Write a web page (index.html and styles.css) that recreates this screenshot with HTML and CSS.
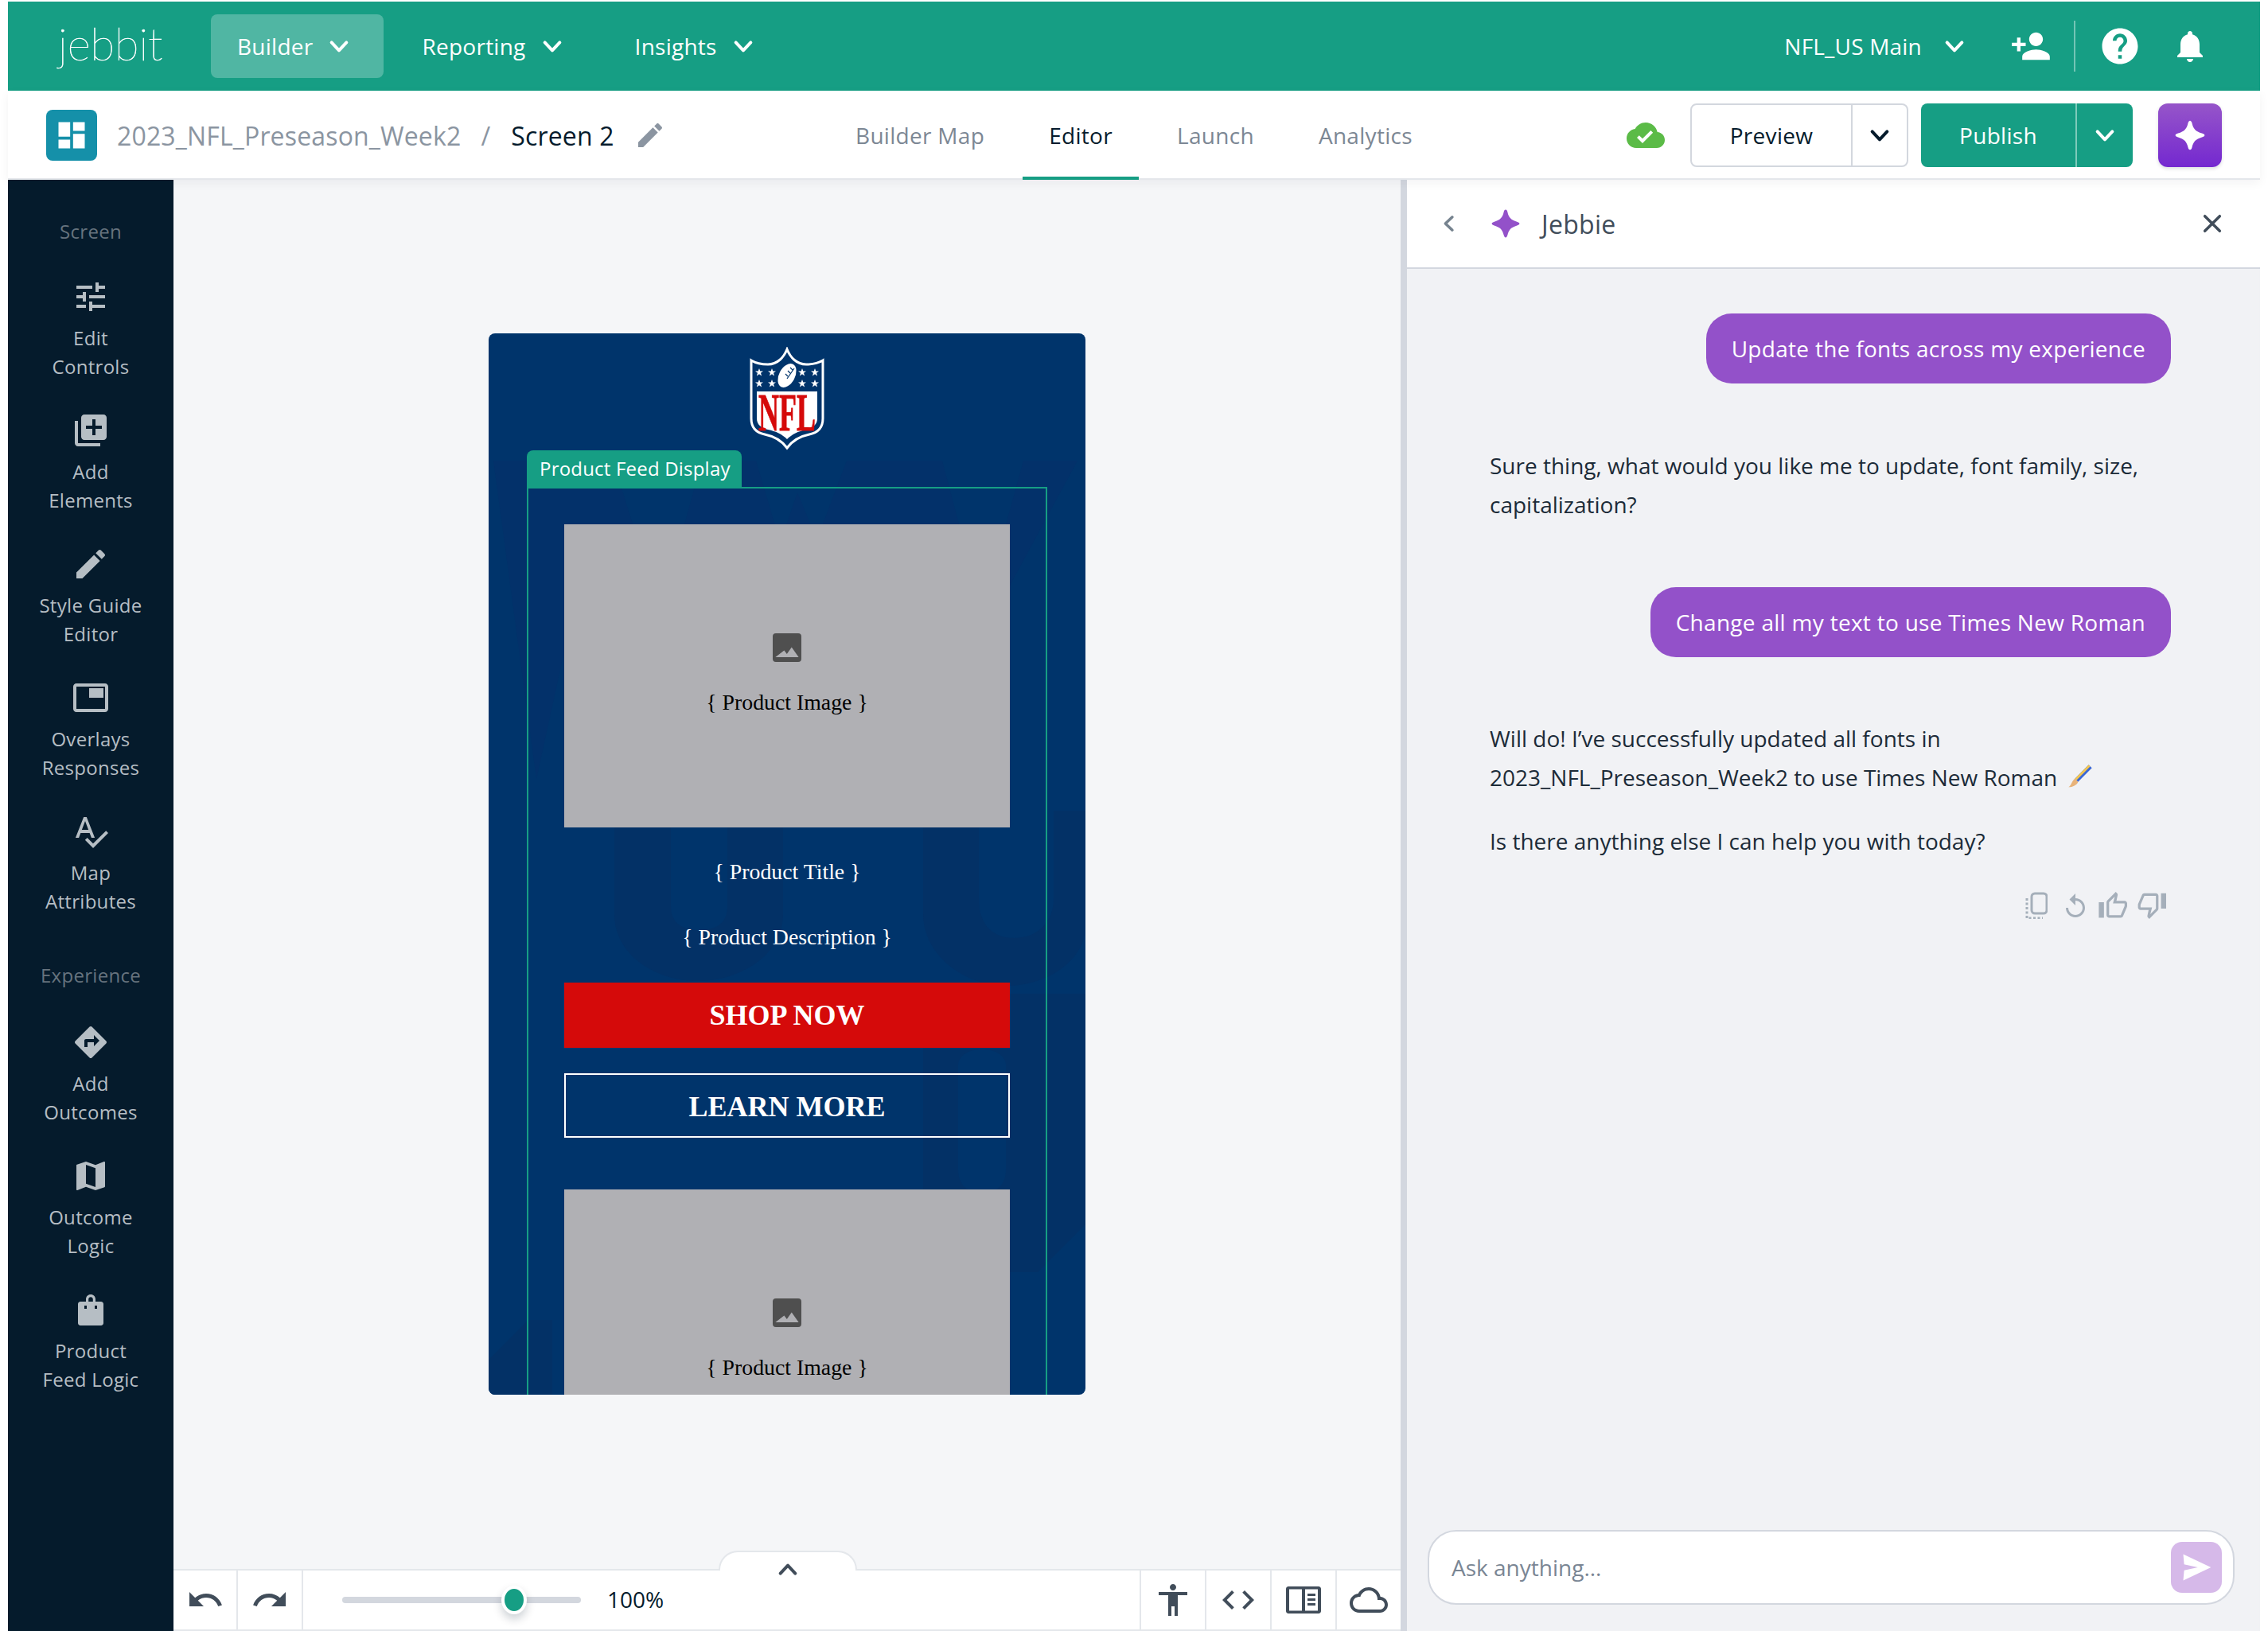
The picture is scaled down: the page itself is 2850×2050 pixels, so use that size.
FILE: index.html
```html
<!DOCTYPE html>
<html lang="en">
<head>
<meta charset="utf-8">
<title>Jebbit Builder</title>
<link rel="stylesheet" href="styles.css">
</head>
<body>
<svg class="defs" width="0" height="0" aria-hidden="true">
  <symbol id="chev" viewBox="0 0 24 24"><path d="M5 8.600 12 16l7-7.400" fill="none" stroke="currentColor" stroke-width="3" stroke-linecap="round" stroke-linejoin="round"/></symbol>
  <symbol id="img" viewBox="0 0 24 24"><path d="M5 3h14a2 2 0 0 1 2 2v14a2 2 0 0 1-2 2H5a2 2 0 0 1-2-2V5a2 2 0 0 1 2-2zm-.3 15h14.600l-4.400-6.200-3 4.200-1.700-2.200z" fill="#4f4f4f" fill-rule="evenodd"/></symbol>
  <symbol id="star" viewBox="0 0 24 24"><path d="M12 1c.8 0 1.200.8 1.500 1.800.9 4.300 2.800 6.300 7.500 7.700 1 .3 2 .7 2 1.500s-1 1.200-2 1.500c-4.700 1.400-6.600 3.400-7.500 7.700-.3 1-.7 1.800-1.500 1.800s-1.200-.8-1.500-1.800c-.9-4.300-2.800-6.300-7.500-7.700-1-.3-2-.7-2-1.500s1-1.200 2-1.500c4.700-1.400 6.600-3.400 7.500-7.700.3-1 .7-1.800 1.500-1.800z" fill="currentColor"/></symbol>
</svg>
<div class="app">
  <header class="topbar">
    <div class="wordmark">jebbit</div>
    <nav class="mainnav">
      <a class="navitem navitem-active">Builder<svg class="chev"><use href="#chev"/></svg></a>
      <a class="navitem">Reporting<svg class="chev"><use href="#chev"/></svg></a>
      <a class="navitem">Insights<svg class="chev"><use href="#chev"/></svg></a>
    </nav>
    <div class="account">
      <span class="accountname">NFL_US Main</span><svg class="chev"><use href="#chev"/></svg>
      <svg class="topicon person" viewBox="0 0 24 24"><path fill="currentColor" d="M15 12c2.210 0 4-1.790 4-4s-1.790-4-4-4-4 1.790-4 4 1.790 4 4 4zm-9-2V7H4v3H1v2h3v3h2v-3h3v-2H6zm9 4c-2.670 0-8 1.340-8 4v2h16v-2c0-2.660-5.330-4-8-4z"/></svg>
      <span class="topdivider"></span>
      <svg class="topicon help" viewBox="0 0 24 24"><path fill="currentColor" d="M12 2C6.480 2 2 6.480 2 12s4.480 10 10 10 10-4.480 10-10S17.520 2 12 2zm1 17h-2v-2h2v2zm2.070-7.750l-.9.920C13.450 12.900 13 13.500 13 15h-2v-.5c0-1.100.45-2.100 1.170-2.830l1.240-1.260c.37-.36.59-.86.59-1.410 0-1.100-.9-2-2-2s-2 .9-2 2H8c0-2.210 1.790-4 4-4s4 1.790 4 4c0 .88-.36 1.680-.93 2.250z"/></svg>
      <svg class="topicon bell" viewBox="0 0 24 24"><path fill="currentColor" d="M12 22c1.100 0 2-.9 2-2h-4c0 1.100.89 2 2 2zm6-6v-5c0-3.070-1.640-5.640-4.500-6.320V4c0-.83-.67-1.500-1.500-1.500s-1.500.67-1.500 1.500v.68C7.630 5.360 6 7.920 6 11v5l-2 2v1h16v-1l-2-2z"/></svg>
    </div>
  </header>

  <div class="subbar">
    <div class="crumbs">
      <span class="projecticon"><svg viewBox="0 0 24 24"><path fill="#fff" d="M3 13h8V3H3v10zm0 8h8v-6H3v6zm10 0h8V11h-8v10zm0-18v6h8V3h-8z"/></svg></span>
      <span class="crumb-project">2023_NFL_Preseason_Week2</span>
      <span class="crumb-sep">/</span>
      <span class="crumb-screen">Screen 2</span>
      <svg class="crumb-edit" viewBox="0 0 24 24"><path fill="currentColor" d="M3 17.250V21h3.750L17.810 9.940l-3.750-3.750L3 17.250zM20.710 7.040c.39-.39.39-1.020 0-1.410l-2.340-2.340c-.39-.39-1.020-.39-1.410 0l-1.830 1.830 3.750 3.750 1.830-1.830z"/></svg>
    </div>
    <nav class="tabs">
      <a class="tab">Builder Map</a>
      <a class="tab tab-active">Editor</a>
      <a class="tab">Launch</a>
      <a class="tab">Analytics</a>
    </nav>
    <div class="actions">
      <svg class="savedcloud" viewBox="0 0 24 24"><path fill="#5bbb47" d="M19.350 10.040C18.670 6.590 15.640 4 12 4 9.110 4 6.600 5.640 5.350 8.040 2.340 8.360 0 10.910 0 14c0 3.310 2.690 6 6 6h13c2.760 0 5-2.240 5-5 0-2.640-2.050-4.780-4.650-4.960zM10 17l-3.500-3.500 1.410-1.410L10 14.170 15.180 9l1.410 1.410L10 17z"/></svg>
      <div class="split split-light">
        <span class="split-main preview-main">Preview</span>
        <span class="split-caret"><svg class="chev"><use href="#chev"/></svg></span>
      </div>
      <div class="split split-primary">
        <span class="split-main publish-main">Publish</span>
        <span class="split-caret"><svg class="chev"><use href="#chev"/></svg></span>
      </div>
      <span class="aibutton"><svg class="aistar"><use href="#star"/></svg></span>
    </div>
  </div>

  <main class="workspace">
    <aside class="sidebar">
      <div class="sidelabel">Screen</div>
      <a class="sideitem">
        <svg viewBox="0 0 24 24"><path fill="currentColor" d="M3 17v2h6v-2H3zM3 5v2h10V5H3zm10 16v-2h8v-2h-8v-2h-2v6h2zM7 9v2H3v2h4v2h2V9H7zm14 4v-2H11v2h10zm-6-4h2V7h4V5h-4V3h-2v6z"/></svg>
        <span>Edit<br>Controls</span>
      </a>
      <a class="sideitem">
        <svg viewBox="0 0 24 24"><path fill="currentColor" d="M4 6H2v14c0 1.100.9 2 2 2h14v-2H4V6zm16-4H8c-1.100 0-2 .9-2 2v12c0 1.100.9 2 2 2h12c1.100 0 2-.9 2-2V4c0-1.100-.9-2-2-2zm-1 9h-4v4h-2v-4H9V9h4V5h2v4h4v2z"/></svg>
        <span>Add<br>Elements</span>
      </a>
      <a class="sideitem">
        <svg viewBox="0 0 24 24"><path fill="currentColor" d="M3 17.250V21h3.750L17.810 9.940l-3.750-3.750L3 17.250zM20.710 7.040c.39-.39.39-1.020 0-1.410l-2.340-2.340c-.39-.39-1.020-.39-1.410 0l-1.830 1.830 3.750 3.750 1.830-1.830z"/></svg>
        <span>Style Guide<br>Editor</span>
      </a>
      <a class="sideitem">
        <svg viewBox="0 0 24 24"><path fill="currentColor" fill-rule="evenodd" d="M3 3h18c1.100 0 2 .9 2 2v14c0 1.100-.9 2-2 2H3c-1.100 0-2-.9-2-2V5c0-1.100.9-2 2-2zm0 2v14h18V5zm8 1h9v6h-9z"/></svg>
        <span>Overlays<br>Responses</span>
      </a>
      <a class="sideitem">
        <svg viewBox="0 0 24 24"><path fill="currentColor" d="M12.450 16h2.090L9.430 3H7.570L2.460 16h2.090l1.120-3h5.640l1.140 3zm-6.020-5L8.500 5.480 10.570 11H6.430zm15.160.59l-8.090 8.090L9.830 16l-1.410 1.410 5.090 5.090L23 13l-1.410-1.410z"/></svg>
        <span>Map<br>Attributes</span>
      </a>
      <div class="sidelabel sidelabel-second">Experience</div>
      <a class="sideitem">
        <svg viewBox="0 0 24 24"><path fill="currentColor" d="M21.710 11.290l-9-9c-.39-.39-1.020-.39-1.410 0l-9 9c-.39.39-.39 1.020 0 1.410l9 9c.39.39 1.020.39 1.410 0l9-9c.39-.38.39-1.010 0-1.410zM14 14.500V12h-4v3H8v-4c0-.55.45-1 1-1h5V7.500l3.500 3.500-3.500 3.500z"/></svg>
        <span>Add<br>Outcomes</span>
      </a>
      <a class="sideitem">
        <svg viewBox="0 0 24 24"><path fill="currentColor" d="M20.500 3l-.16.03L15 5.100 9 3 3.360 4.900c-.21.07-.36.25-.36.48V20.500c0 .28.22.5.5.5l.16-.03L9 18.900l6 2.100 5.640-1.900c.21-.07.36-.25.36-.48V3.500c0-.28-.22-.5-.5-.5zM15 19l-6-2.110V5l6 2.110V19z"/></svg>
        <span>Outcome<br>Logic</span>
      </a>
      <a class="sideitem">
        <svg viewBox="0 0 24 24"><path fill="currentColor" fill-rule="evenodd" d="M9 7V5.500C9 3.800 10.300 2.500 12 2.500s3 1.300 3 3V7h3.500c.8 0 1.500.7 1.500 1.500v12c0 .8-.7 1.500-1.500 1.500h-13c-.8 0-1.500-.7-1.500-1.500v-12C4 7.700 4.700 7 5.500 7zm1.600 0h2.800V5.500c0-.8-.6-1.400-1.400-1.400s-1.400.6-1.400 1.400zM8 9.500v2h1.500v-2zm6.500 0v2H16v-2z"/></svg>
        <span>Product<br>Feed Logic</span>
      </a>
    </aside>

    <section class="editor">
      <div class="stage">
        <div class="phone">
          <svg class="watermark" viewBox="0 0 750 1334" aria-hidden="true">
            <path fill="#03316a" d="M6 160h150l60 190 52-190h68l50 170 64-170h120l50 190 52-190h68L610 400H470L388 200 320 400H190L130 240 60 560z"/>
            <path fill="#033166" d="M158 600v130c0 50 50 84 105 84s107-34 107-84V600h-70v120c0 20-12 30-35 30s-36-10-36-30V600zM546 600v130c0 50 50 90 105 90 50 0 95-30 99-70V600h-40v110c0 30-20 50-50 50-20 0-44-10-44-50V600zM546 870l40-40h164v290l-60 60H546zM0 1290l50-50h30v94H0z"/>
            <path fill="#00346b" d="M620 900c-20 0-30 10-30 20v130c0 20 10 30 30 30s30-10 30-30V920c0-10-10-20-30-20z"/>
          </svg>
          <svg class="nfl" viewBox="-2 -2 96 130" role="img" aria-label="NFL shield">
            <path fill="#00346b" stroke="#fff" stroke-width="3" d="M46 1C50 11 58 20 70 20 78 20 86 18 91 15V88C91 100 84 106 74 108 64 110 54 114 46 125 38 114 28 110 18 108 8 106 1 100 1 88V15C6 18 14 20 22 20 34 20 42 11 46 1Z"/>
            <path fill="#fff" d="M8 54H84V88C84 96 78 100 70 102 60 104 52 108 46 114 40 108 32 104 22 102 14 100 8 96 8 88Z"/>
            <g fill="#fff">
              <path id="nflstar" d="M11 25l1.300 3.500h3.700l-3 2.300 1.100 3.700L11 32.300l-3.100 2.200L9 30.800l-3-2.300h3.700z"/>
              <use href="#nflstar" x="16"/><use href="#nflstar" x="54"/><use href="#nflstar" x="70"/>
              <use href="#nflstar" y="14"/><use href="#nflstar" x="16" y="14"/><use href="#nflstar" x="54" y="14"/><use href="#nflstar" x="70" y="14"/>
              <ellipse cx="46" cy="34" rx="10" ry="16" transform="rotate(28 46 34)"/>
            </g>
            <path d="M46 38l9-13M44 32l3 3M47 28l3 3M50 24l3 3" stroke="#00346b" stroke-width="1.200" fill="none"/>
            <text class="nfltext" x="46" y="103" text-anchor="middle" textLength="72" lengthAdjust="spacingAndGlyphs">NFL</text>
          </svg>
          <div class="feedtab">Product Feed Display</div>
          <div class="feedframe">
            <div class="placeholder">
              <svg class="phicon"><use href="#img"/></svg>
              <span>{ Product Image }</span>
            </div>
            <div class="ptitle">{ Product Title }</div>
            <div class="pdesc">{ Product Description }</div>
            <div class="cta cta-shop">SHOP NOW</div>
            <div class="cta cta-learn">LEARN MORE</div>
            <div class="placeholder">
              <svg class="phicon"><use href="#img"/></svg>
              <span>{ Product Image }</span>
            </div>
          </div>
        </div>
      </div>
      <div class="toolbar">
        <span class="expander"><svg class="chev"><use href="#chev"/></svg></span>
        <span class="toolcell toolcell-first"><svg viewBox="0 0 24 24"><path fill="currentColor" d="M12.500 8c-2.650 0-5.050.99-6.900 2.600L2 7v9h9l-3.620-3.620c1.390-1.160 3.160-1.880 5.120-1.880 3.540 0 6.550 2.310 7.600 5.500l2.370-.78C21.080 11.030 17.150 8 12.500 8z"/></svg></span>
        <span class="toolcell"><svg viewBox="0 0 24 24"><path fill="currentColor" d="M18.400 10.600C16.550 8.990 14.150 8 11.500 8c-4.650 0-8.580 3.030-9.960 7.220L3.900 16c1.050-3.190 4.050-5.500 7.600-5.500 1.950 0 3.730.72 5.120 1.880L13 16h9V7l-3.600 3.600z"/></svg></span>
        <div class="zoom">
          <div class="track"><span class="thumb"></span></div>
          <span class="zoomvalue">100%</span>
        </div>
        <span class="toolcell toolcell-b"><svg viewBox="0 0 24 24"><path fill="currentColor" d="M12 2c1.100 0 2 .9 2 2s-.9 2-2 2-2-.9-2-2 .9-2 2-2zm9 7h-6v13h-2v-6h-2v6H9V9H3V7h18v2z"/></svg></span>
        <span class="toolcell toolcell-b"><svg viewBox="0 0 24 24"><path fill="currentColor" d="M9.400 16.600L4.800 12l4.600-4.600L8 6l-6 6 6 6 1.400-1.400zm5.200 0l4.600-4.600-4.600-4.600L16 6l6 6-6 6-1.400-1.400z"/></svg></span>
        <span class="toolcell toolcell-b"><svg viewBox="0 0 24 24"><path fill="currentColor" fill-rule="evenodd" d="M2.500 3.500h19c.8 0 1.500.7 1.500 1.500v14c0 .8-.7 1.500-1.500 1.500h-19C1.700 20.500 1 19.800 1 19V5c0-.8.7-1.500 1.500-1.500zM3 5.300v13.400h8V5.300zm10 0v13.400h8V5.300zM14.500 8h5v1.500h-5zm0 3h5v1.500h-5zm0 3h5v1.500h-5z"/></svg></span>
        <span class="toolcell toolcell-b"><svg viewBox="0 0 24 24"><path fill="currentColor" d="M19.350 10.040C18.670 6.590 15.640 4 12 4 9.110 4 6.600 5.640 5.350 8.040 2.340 8.360 0 10.910 0 14c0 3.310 2.690 6 6 6h13c2.760 0 5-2.240 5-5 0-2.640-2.050-4.780-4.650-4.960zM19 18H6c-2.210 0-4-1.790-4-4s1.790-4 4-4h.71C7.370 7.690 9.480 6 12 6c3.040 0 5.500 2.460 5.500 5.500v.5H19c1.660 0 3 1.340 3 3s-1.340 3-3 3z"/></svg></span>
      </div>
    </section>

    <aside class="panel">
      <header class="panelhead">
        <svg class="backchev"><use href="#chev"/></svg>
        <svg class="headstar"><use href="#star"/></svg>
        <span class="paneltitle">Jebbie</span>
        <svg class="closex" viewBox="0 0 24 24"><path d="M4 4l16 16M20 4L4 20" stroke="currentColor" stroke-width="3" stroke-linecap="round"/></svg>
      </header>
      <div class="chat">
        <div class="bubble bubble-first">Update the fonts across my experience</div>
        <p class="botmsg botmsg-first">Sure thing, what would you like me to update, font family, size,<br>capitalization?</p>
        <div class="bubble bubble-second">Change all my text to use Times New Roman</div>
        <p class="botmsg botmsg-second">Will do! I’ve successfully updated all fonts in<br>2023_NFL_Preseason_Week2 to use Times New Roman <svg class="brush" viewBox="0 0 24 24"><path d="M20 1l3 3L10 17l-3-3z" fill="#3a67d6"/><path d="M20 1l1.500 1.500L8.500 15.500 7 14z" fill="#f3c64f"/><path d="M7 14l3 3c-1 3-5 5-9 5 3-2 3-6 6-8z" fill="#e8b37a"/></svg></p>
        <p class="botmsg botmsg-third">Is there anything else I can help you with today?</p>
        <div class="feedback">
          <svg class="fb fb-copy" viewBox="0 0 28 34"><rect x="8" y="2" width="19" height="25" rx="4" fill="none" stroke="currentColor" stroke-width="3"/><path d="M2 8v25h20" fill="none" stroke="currentColor" stroke-width="3" stroke-dasharray="3 2.500"/></svg>
          <svg class="fb fb-replay" viewBox="2 0 20 22"><path fill="currentColor" d="M12 5V1L7 6l5 5V7c3.310 0 6 2.690 6 6s-2.690 6-6 6-6-2.690-6-6H4c0 4.420 3.580 8 8 8s8-3.580 8-8-3.580-8-8-8z"/></svg>
          <svg class="fb fb-thumb fb-up" viewBox="1 1 23 21"><path fill="currentColor" d="M9 21h9c.83 0 1.540-.5 1.840-1.220l3.020-7.050c.09-.23.14-.47.14-.73v-2c0-1.100-.9-2-2-2h-6.310l.95-4.570.03-.32c0-.41-.17-.79-.44-1.060L14.170 1 7.580 7.590C7.220 7.950 7 8.450 7 9v10c0 1.100.9 2 2 2zM9 9l4.340-4.340L12 10h9v2l-3 7H9V9zM1 9h4v12H1z"/></svg>
          <svg class="fb fb-thumb" viewBox="0 2 23 21"><path fill="currentColor" d="M15 3H6c-.83 0-1.540.5-1.840 1.220l-3.020 7.050c-.09.23-.14.47-.14.730v2c0 1.100.9 2 2 2h6.310l-.95 4.570-.03.32c0 .41.17.79.44 1.060L9.830 23l6.590-6.590c.36-.36.58-.86.58-1.410V5c0-1.100-.9-2-2-2zm0 12l-4.340 4.340L12 14H3v-2l3-7h9v10zm4-12h4v12h-4z"/></svg>
        </div>
      </div>
      <div class="composer">
        <span class="placeholdertext">Ask anything...</span>
        <span class="send"><svg viewBox="0 0 24 24"><path fill="#fff" d="M3 3l19 9-19 9 .6-7 9.400-2-9.400-2z"/></svg></span>
      </div>
    </aside>
  </main>
</div>
</body>
</html>
```

FILE: styles.css
```css
* { box-sizing: border-box; }
html, body { margin: 0; padding: 0; background: #fff; }
body { width: 2850px; height: 2050px; overflow: hidden; font-family: "Open Sans", "Noto Sans", sans-serif; color: #051b2c; }
.defs { position: absolute; }
.app { display: flex; flex-direction: column; width: 2830px; height: 2048px; margin: 2px 10px 0; }

.chev { width: 32px; height: 32px; flex: none; }

/* top bar */
.topbar { flex: none; height: 112px; display: flex; align-items: center; background: #169e84; color: #fff; padding-left: 65px; font-size: 28px; }
.wordmark { width: 190px; font-family: "Lato", "Open Sans", sans-serif; font-weight: 100; font-size: 56px; line-height: 80px; margin: -6px 2px 0 -2px; -webkit-text-stroke: .6px #fff; }
.mainnav { display: flex; gap: 15px; letter-spacing: .25px; }
.navitem { display: flex; align-items: center; gap: 17px; height: 80px; padding: 0 40px 0 33px; border-radius: 8px; }
.navitem-active { background: rgba(255, 255, 255, .25); }
.account { margin-left: auto; display: flex; align-items: center; padding-right: 64px; }
.accountname { margin-right: 25px; letter-spacing: .2px; }
.topicon { flex: none; width: 48px; height: 48px; }
.person { width: 52px; height: 52px; margin-left: 54px; }
.topdivider { width: 2px; height: 64px; background: rgba(255, 255, 255, .4); margin: 0 29px 0 28px; }
.help { width: 54px; height: 54px; }
.bell { width: 48px; height: 48px; margin-left: 37px; }

/* sub bar */
.subbar { flex: none; height: 112px; display: grid; grid-template-columns: 1034px auto 1fr; align-items: stretch; background: #fff; border-bottom: 2px solid #e4e7eb; box-shadow: 0 4px 12px rgba(5, 27, 44, .05); position: relative; z-index: 2; }
.crumbs { display: flex; align-items: center; padding-left: 48px; font-size: 32px; letter-spacing: .16px; }
.projecticon { width: 64px; height: 64px; border-radius: 8px; background: #1590a9; display: flex; align-items: center; justify-content: center; margin-right: 25px; }
.projecticon svg { width: 44px; height: 44px; }
.crumb-project { color: #8b95a1; }
.crumb-sep { color: #8b95a1; margin: 0 26px 0 25px; }
.crumb-screen { color: #051b2c; }
.crumb-edit { width: 40px; height: 40px; margin-left: 25px; color: #8b95a1; }
.tabs { display: flex; gap: 15px; font-size: 28px; color: #7c8794; letter-spacing: .3px; margin-left: -2px; }
.tab { display: flex; align-items: center; padding: 0 33px; }
.tab-active { color: #051b2c; border-bottom: 4px solid #169e84; padding-top: 4px; height: 112px; }
.actions { display: flex; align-items: center; justify-content: flex-end; padding-right: 48px; }
.savedcloud { width: 50px; height: 48px; margin-right: 31px; }
.split { display: flex; height: 80px; border-radius: 8px; font-size: 28px; letter-spacing: .3px; }
.split-light { width: 274px; border: 2px solid #d3d7de; background: #fff; margin-right: 16px; }
.split-primary { width: 266px; background: #169e84; color: #fff; margin-right: 32px; }
.split-main { display: flex; align-items: center; justify-content: center; }
.preview-main { width: 202px; border-right: 2px solid #d3d7de; }
.publish-main { width: 196px; border-right: 2px solid rgba(255, 255, 255, .45); }
.split-caret { flex: 1; display: flex; align-items: center; justify-content: center; }
.aibutton { width: 80px; height: 80px; border-radius: 12px; background: linear-gradient(180deg, #9655c9, #7428d0); color: #fff; display: flex; align-items: center; justify-content: center; box-shadow: 0 2px 4px rgba(5, 27, 44, .15); }
.aistar { width: 40px; height: 40px; }

/* workspace */
.workspace { flex: 1; min-height: 0; display: flex; }
.sidebar { flex: none; width: 208px; height: 1826px; padding-top: 47px; background: #051b2c; color: #b6bec4; font-size: 24px; line-height: 36px; letter-spacing: .3px; text-align: center; }
.sidelabel { color: #66737e; height: 36px; margin-bottom: 40px; }
.sidelabel-second { margin-top: 19px; margin-bottom: 42px; }
.sideitem { display: block; height: 168px; }
.sideitem:last-child { height: auto; }
.sideitem svg { display: block; width: 48px; height: 48px; margin: 0 auto 10px; }
.sideitem span { display: block; }

/* editor */
.editor { flex: none; width: 1542px; display: flex; flex-direction: column; }
.stage { flex: 1; min-height: 0; background: #f5f6f8; padding: 193px 0 0 396px; }
.phone { position: relative; width: 750px; height: 1334px; border-radius: 8px; background: #00346b; overflow: hidden; }
.watermark { position: absolute; left: 0; top: 0; width: 750px; height: 1334px; }
.nfl { position: relative; display: block; width: 96px; height: 130px; margin: 17px auto 0; }
.nfltext { font-family: "Liberation Serif", serif; font-weight: 700; font-size: 68px; fill: #d50a0a; stroke: #d50a0a; stroke-width: .8px; }
.feedtab { position: relative; width: 270px; height: 46px; margin: 0 0 0 48px; padding-left: 16px; background: #169e84; color: #fff; border-radius: 8px 8px 0 0; font-size: 24px; line-height: 46px; letter-spacing: .2px; }
.feedframe { position: relative; width: 654px; margin-left: 48px; height: 1200px; padding: 45px; border: 2px solid #169e84; font-family: "Liberation Serif", serif; font-size: 27.8px; line-height: 32px; color: #fff; text-align: center; }
.placeholder { width: 560px; height: 381px; padding-top: 131px; background: #b0b0b4; color: #000; }
.phicon { display: block; width: 48px; height: 48px; margin: 0 auto 29px; }
.ptitle { margin-top: 40px; }
.pdesc { margin-top: 50px; }
.cta { width: 560px; height: 82px; font-weight: 700; font-size: 36px; line-height: 82px; }
.cta-shop { background: #d50a0a; margin-top: 41px; }
.cta-learn { border: 2px solid #fff; margin-top: 32px; margin-bottom: 65px; line-height: 80px; height: 81px; }

/* toolbar */
.toolbar { position: relative; flex: none; height: 78px; display: flex; background: #fff; border-top: 2px solid #e4e7eb; border-bottom: 2px solid #e4e7eb; color: #414d5a; }
.toolcell { flex: none; width: 82px; display: flex; align-items: center; justify-content: center; border-right: 2px solid #e4e7eb; }
.toolcell svg { width: 48px; height: 48px; }
.toolcell-first { width: 81px; }
.toolcell-b { border-right: 0; border-left: 2px solid #e4e7eb; }
.zoom { flex: 1; display: flex; align-items: center; padding-left: 49px; }
.track { position: relative; width: 300px; height: 8px; border-radius: 4px; background: #d3d7de; }
.thumb { position: absolute; left: 200px; top: -14px; width: 32px; height: 36px; border-radius: 50%; background: #169e84; border: 4px solid #fff; box-shadow: 0 6px 12px rgba(5, 27, 44, .2); }
.zoomvalue { margin: -2px 0 0 33px; font-size: 28px; color: #051b2c; }
.expander { position: absolute; left: 685px; top: -25px; width: 174px; height: 25px; background: #fff; border: 2px solid #e4e7eb; border-bottom: 0; border-radius: 24px 24px 0 0; display: flex; justify-content: center; align-items: flex-start; color: #414d5a; z-index: 1; }
.expander .chev { transform: rotate(180deg); margin-top: 6px; overflow: visible; }

/* panel */
.panel { flex: none; width: 1080px; display: flex; flex-direction: column; background: #f1f2f5; border-left: 8px solid #d3d7df; }
.panelhead { flex: none; height: 112px; display: flex; align-items: center; background: #fff; border-bottom: 2px solid #d3d7df; color: #414d5a; }
.backchev { width: 28px; height: 28px; margin-left: 39px; transform: rotate(90deg); color: #76838f; }
.headstar { width: 38px; height: 38px; margin-left: 38px; color: #9351c9; }
.paneltitle { margin-left: 26px; font-size: 32px; letter-spacing: .3px; }
.closex { width: 28px; height: 28px; margin-left: auto; margin-right: 46px; }
.chat { flex: 1; min-height: 0; padding: 56px 112px 0 104px; font-size: 28px; line-height: 49px; }
.bubble { width: fit-content; margin-left: auto; height: 88px; padding: 0 32px; border-radius: 32px; background: #9351c9; color: #fff; line-height: 88px; letter-spacing: .29px; }
.botmsg { margin: 0; color: #1c2b38; }
.botmsg-first { margin-top: 79px; margin-bottom: 79px; }
.botmsg-second { margin-top: 78px; }
.botmsg-third { margin-top: 31px; }
.brush { width: 32px; height: 32px; vertical-align: -4px; margin-left: 6px; }
.feedback { display: flex; justify-content: flex-end; align-items: center; gap: 14px; margin-top: 39px; padding-right: 6px; color: #a5afba; }
.fb { display: block; height: 34px; }
.fb-copy { width: 28px; margin-right: 6px; }
.fb-replay { width: 30px; }
.fb-thumb { width: 37px; }
.fb-up { width: 38px; margin-right: -4px; }
.composer { flex: none; position: relative; display: flex; align-items: center; justify-content: space-between; height: 94px; margin: 0 32px 33px 26px; padding: 0 14px 0 28px; background: #fff; border: 2px solid #d3d7df; border-radius: 36px; }
.placeholdertext { color: #7a8694; font-size: 28px; }
.send { width: 64px; height: 64px; border-radius: 14px; background: #d6b9e9; display: flex; align-items: center; justify-content: center; }
.send svg { width: 44px; height: 44px; }
```
